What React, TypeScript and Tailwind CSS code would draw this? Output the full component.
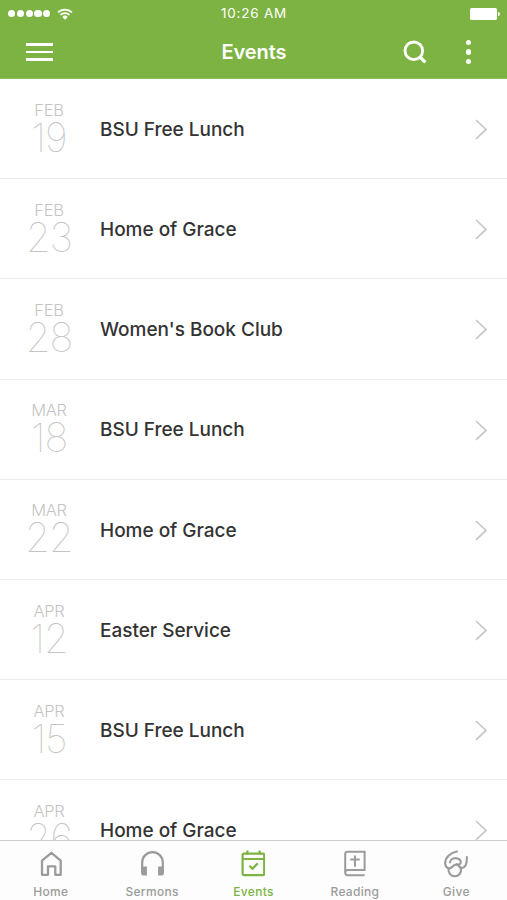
import React from 'react'

type IconProps = { className?: string }

const HomeIcon: React.FC<IconProps> = ({ className }) => (
  <svg viewBox="0 0 24 28" className={className} fill="none" stroke="currentColor" strokeWidth="2.3">
    <path d="M3 10.7 12.4 2.8l9.3 7.9v14.1h-5.4v-8.4H9v8.4H3z" strokeLinejoin="round" />
  </svg>
)

const HeadphonesIcon: React.FC<IconProps> = ({ className }) => (
  <svg viewBox="0 0 24 28" className={className} fill="none" stroke="currentColor" strokeWidth="2.2">
    <path d="M2.2 22V12.4a10.3 10.3 0 0 1 20.6 0V22" />
    <path d="M1.1 16.6h5.8v8.8H3.3a2.2 2.2 0 0 1-2.2-2.2zM23.9 16.6h-5.8v8.8h3.6a2.2 2.2 0 0 0 2.2-2.2z" fill="currentColor" stroke="none" />
  </svg>
)

const CalendarIcon: React.FC<IconProps> = ({ className }) => (
  <svg viewBox="0 0 24 28" className={className} fill="none" stroke="currentColor" strokeWidth="2.2">
    <rect x="1.6" y="3.6" width="21.6" height="21.6" rx="1.4" />
    <path d="M1.6 9h21.6M6.4 .6v4M18.6 .6v4" />
    <path d="m8.4 15.8 3 2.9 5.3-5.3" />
  </svg>
)

const BibleIcon: React.FC<IconProps> = ({ className }) => (
  <svg viewBox="0 0 24 28" className={className} fill="none" stroke="currentColor" strokeWidth="2">
    <path d="M21.6 25.2H4.8a2.6 2.6 0 0 1-2.6-2.6V3.7a2 2 0 0 1 2-2h17.4v18.4H4.8a2.6 2.6 0 0 0-2.6 2.5" />
    <path d="M12 5.4v11.4M7.3 9.5h9.4" />
  </svg>
)

const GiveIcon: React.FC<IconProps> = ({ className }) => (
  <svg viewBox="0 0 24 28" className={className} fill="none" stroke="currentColor" strokeWidth="2.1">
    <path d="M13.8 1.2C6 2.6 1 7.6 1.2 13.4c.1 2.4 1 4.2 3.2 4.9 2.1.4 3.4-.8 4.8-2.3 1.7-1.8 4-1.8 5.6-.2" />
    <path d="M5.9 13.2c.2-3.1 2.6-5.1 5.6-5.1 3.3 0 5.5 2 5.3 4.3-.3 2.3-3.2 2.8-5 1.4" />
    <path d="M4.6 18.2c-1 4.3 2.2 8 6.1 8 4.2 0 7-3.5 6.2-7.2-.3-1.3-1-2.4-2.1-3.2" />
    <path d="M22.8 6.2c.3 5.6-.5 10-3.4 11.4-2 .8-3.4-.2-4.6-1.8" />
  </svg>
)

const events = [
  { month: 'FEB', day: '19', title: 'BSU Free Lunch' },
  { month: 'FEB', day: '23', title: 'Home of Grace' },
  { month: 'FEB', day: '28', title: "Women's Book Club" },
  { month: 'MAR', day: '18', title: 'BSU Free Lunch' },
  { month: 'MAR', day: '22', title: 'Home of Grace' },
  { month: 'APR', day: '12', title: 'Easter Service' },
  { month: 'APR', day: '15', title: 'BSU Free Lunch' },
  { month: 'APR', day: '26', title: 'Home of Grace' },
]

const tabs = [
  { name: 'Home', icon: HomeIcon },
  { name: 'Sermons', icon: HeadphonesIcon },
  { name: 'Events', icon: CalendarIcon },
  { name: 'Reading', icon: BibleIcon },
  { name: 'Give', icon: GiveIcon },
]

const StatusBar: React.FC = () => (
  <div className="grid h-[27px] grid-cols-3 items-center pl-2 pr-[7px]">
    <div className="flex items-center">
      <div className="flex gap-[1.6px]">
        {[0, 1, 2, 3, 4].map((dot) => (
          <span key={dot} className="h-[7.2px] w-[7.2px] rounded-full bg-white" />
        ))}
      </div>
      <svg viewBox="0 0 16 12" className="ml-[7px] h-3 w-4" fill="none" stroke="white" strokeWidth="1.7">
        <path d="M1 4.4a10 10 0 0 1 14 0M3.4 7a6.6 6.6 0 0 1 9.2 0" />
        <path d="M5.3 8.9a3.9 3.9 0 0 1 5.4 0L8 11.7z" fill="white" stroke="none" />
      </svg>
    </div>
    <span className="text-center text-[13.5px] tracking-[0.75px] whitespace-nowrap">10:26 AM</span>
    <div className="flex items-center justify-end gap-px">
      <span className="h-3 w-[27px] rounded-[1.5px] bg-white" />
      <span className="h-1 w-[2px] rounded-r-full bg-white" />
    </div>
  </div>
)

const Header: React.FC = () => (
  <header className="h-[79px] shrink-0 border-b border-[#8fbe5e] bg-[#7cb342] text-white">
    <StatusBar />
    <div className="grid h-[50px] grid-cols-3 items-center pl-[26px] pr-9">
      <button aria-label="Menu" className="flex w-[27px] flex-col gap-[5px]">
        <span className="h-[2.5px] bg-white" />
        <span className="h-[2.5px] bg-white" />
        <span className="h-[2.5px] bg-white" />
      </button>
      <h1 className="pl-[11px] text-center text-[20px] font-semibold tracking-[-0.1px]">Events</h1>
      <div className="flex items-center justify-end gap-[38.5px]">
        <svg viewBox="0 0 24 24" className="h-6 w-6" fill="none" stroke="white" strokeWidth="2.9">
          <circle cx="10.8" cy="10.8" r="8.8" />
          <path d="m17 17 5.4 5.4" strokeWidth="3.2" />
        </svg>
        <div className="flex flex-col gap-[4.6px]">
          <span className="h-[5.2px] w-[5.2px] rounded-full bg-white" />
          <span className="h-[5.2px] w-[5.2px] rounded-full bg-white" />
          <span className="h-[5.2px] w-[5.2px] rounded-full bg-white" />
        </div>
      </div>
    </div>
  </header>
)

const App: React.FC = () => {
  return (
    <div className="flex h-[900px] w-[507px] flex-col overflow-hidden bg-white font-['Inter','Liberation_Sans',sans-serif]">
      <Header />

      {/* Event list */}
      <main className="flex-1 overflow-hidden">
        {events.map((event) => (
          <div key={`${event.month}-${event.day}`} className="flex h-[100.2px] items-center border-b border-[#ebebeb] pt-px pr-[19px]">
            <div className="mr-px flex w-[99px] shrink-0 flex-col items-center pb-[3px] text-[#c4c4c4]">
              <span className="pr-px text-[16.5px] leading-[20px] font-light tracking-[-0.3px]">{event.month}</span>
              <span className="pr-px text-[40px] leading-[36px] font-thin tracking-[-1px]">{event.day}</span>
            </div>
            <span className="flex-1 pt-[2px] text-[19px] font-medium tracking-[-0.02px] text-[#333333]">{event.title}</span>
            <svg viewBox="0 0 14 22" className="h-[22px] w-[14px]" fill="none" stroke="#c7c7c7" strokeWidth="1.7">
              <path d="m2 2 10 9.4L2 20.8" />
            </svg>
          </div>
        ))}
      </main>

      {/* Bottom tabs */}
      <nav className="grid h-[60px] shrink-0 grid-cols-5 border-t border-[#cfcfcf] bg-[#fdfdfd]">
        {tabs.map((tab) => {
          const Icon = tab.icon
          return (
            <button
              key={tab.name}
              className={`flex flex-col items-center pt-[9px] ${
                tab.name === 'Events' ? 'text-[#7cb342]' : 'text-[#9b9b9b]'
              }`}
            >
              <Icon className="h-7 w-6" />
              <span className="mt-[5px] text-[12px] leading-[18px] font-medium tracking-[0.3px]">{tab.name}</span>
            </button>
          )
        })}
      </nav>
    </div>
  )
}

export default App
